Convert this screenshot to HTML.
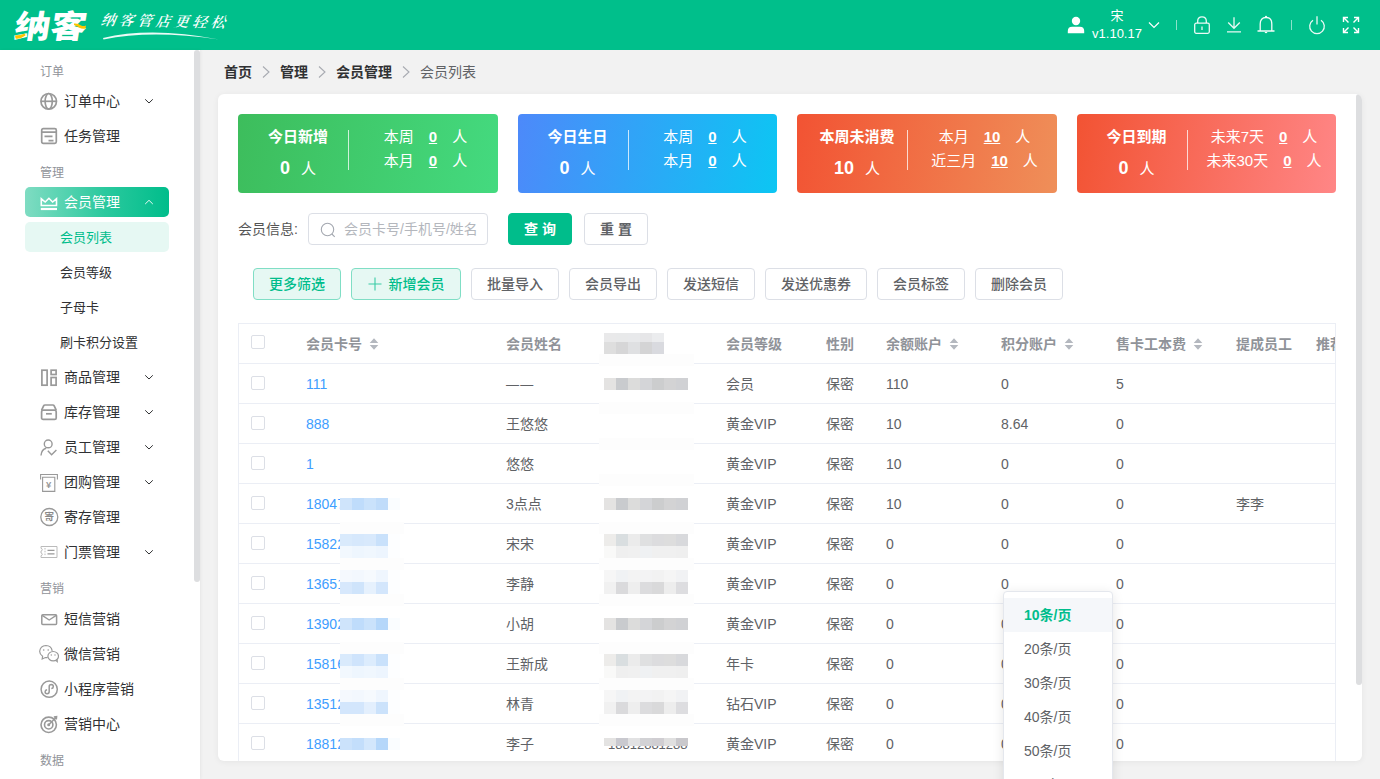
<!DOCTYPE html>
<html lang="zh-CN">
<head>
<meta charset="utf-8">
<title>会员列表</title>
<style>
*{box-sizing:border-box;margin:0;padding:0}
html,body{width:1380px;height:779px;overflow:hidden}
body{font-family:"Liberation Sans","Noto Sans CJK SC",sans-serif;font-size:14px;color:#303133;background:#f2f2f2;position:relative}
.abs{position:absolute}
/* top bar */
#top{position:absolute;left:0;top:0;width:1380px;height:50px;background:#00bf8b;color:#fff}
#top svg{position:absolute}
/* sidebar */
#side{position:absolute;left:0;top:50px;width:200px;height:729px;background:#fff;box-shadow:1px 0 3px rgba(0,0,0,.05)}
#side .thumb{position:absolute;left:194px;top:0;width:6px;height:532px;background:#dddee0;border-radius:3px}
.grp{position:absolute;left:40px;font-size:12px;color:#909399;line-height:16px;height:16px;margin-top:1px}
.mi{position:absolute;left:25px;width:144px;height:30px;line-height:30px;border-radius:5px;font-size:14px;color:#303133}
.mi .t{position:absolute;left:39px;top:0;font-weight:400}
.mi svg.ic{position:absolute;left:14px;top:5px}
.mi svg.cv{position:absolute;left:119px;top:12px}
.mi.act{background:linear-gradient(90deg,#7fdcc2 0%,#2bc99e 55%,#00bd8b 100%);color:#fff}
.si{position:absolute;left:25px;width:144px;height:30px;line-height:32px;border-radius:5px;font-size:13px;color:#303133;padding-left:35px}
.si.act{background:#e6f8f3;color:#00bd8b}
/* main */
#bc{position:absolute;left:224px;top:62px;height:20px;line-height:20px;font-size:14px;white-space:nowrap}
#bc b{font-weight:700;color:#303133}
#bc span.l{color:#606266}
#bc svg{display:inline-block;vertical-align:-1px;margin:0 9px 0 9px}
#card{position:absolute;left:218px;top:94px;width:1144px;height:667px;background:#fff;border-radius:6px;box-shadow:0 1px 6px rgba(0,0,0,.06);overflow:hidden}
#card .thumb{position:absolute;left:1138px;top:0;width:6px;height:591px;background:#dddee0;border-radius:3px}
.stat{position:absolute;top:20px;width:259.500px;height:79px;border-radius:4px;color:#fff;font-size:15px}
.stat .h{position:absolute;left:0;width:120px;top:11px;text-align:center;font-weight:700;line-height:24px}
.stat .n{position:absolute;left:0;width:120px;top:41px;text-align:center;line-height:26px}
.stat .n b{font-size:18px;margin-right:11px}
.stat .dv{position:absolute;left:110px;top:16px;width:1px;height:40px;background:rgba(255,255,255,.75)}
.stat .r{position:absolute;left:113px;width:149px;text-align:center;line-height:24px;white-space:nowrap}
.stat .r u{font-weight:700;margin:0 15px 0 15px;font-size:15px}
.btn{position:absolute;height:32px;line-height:30px;border:1px solid #dcdfe6;border-radius:4px;background:#fff;color:#606266;font-size:14px;font-weight:500;text-align:center;white-space:nowrap}
.btn.g{background:#e6f8f3;border-color:#80dec5;color:#00bd8b}
/* table */
#tb{position:absolute;left:20px;top:229px;width:1098px;height:440px;border-left:1px solid #ebeef5;border-top:1px solid #ebeef5;border-right:1px solid #ebeef5;overflow:hidden}
.tr{position:absolute;left:0;width:1098px;height:40px;border-bottom:1px solid #ebeef5;line-height:39px;font-size:14px;color:#606266;white-space:nowrap}
.tr span{position:absolute;top:1px}
.tr.hd{color:#909399;font-weight:700}
.tr a{position:absolute;color:#409eff;text-decoration:none;top:1px}
.cb{position:absolute;left:12px;top:12px;width:14px;height:14px;border:1px solid #dcdfe6;border-radius:2px;background:#fff}
.c1{left:67px}.c2{left:267px}.c3{left:367px}.c4{left:487px}.c5{left:587px}.c6{left:647px}.c7{left:762px}.c8{left:877px}.c9{left:997px}.c10{left:1077px}
.sort{position:absolute;top:14px;width:10px;height:12px}
#mz i{position:absolute;display:block}
/* dropdown */
#dd{position:absolute;left:1003px;top:591px;width:110px;height:230px;background:#fff;border:1px solid #e4e7ed;border-radius:4px;box-shadow:0 2px 12px rgba(0,0,0,.1)}
#dd div{position:absolute;left:0;width:108px;height:34px;line-height:34px;padding-left:20px;font-size:14px;color:#606266}
#dd div.sel{background:#f5f7fa;color:#00bd8b;font-weight:700}
</style>
</head>
<body>
<div id="top">
<svg style="left:10px;top:4px" width="100" height="42" viewBox="0 0 100 42">
<text x="2.500" y="34" font-family="'Liberation Sans','Noto Sans CJK SC',sans-serif" font-weight="900" font-size="32" fill="#fff" transform="skewX(-9) translate(6,0)" textLength="72" lengthAdjust="spacingAndGlyphs">纳客</text>
<path d="M5 31.5 Q10 31.5 15 29.5 L15.5 31.5 Q10 35.5 5.5 34.5Z" fill="#fdc500"/>
<path d="M64 19.5 Q68 19 71 21.5 Q73.500 22.5 76 21.5 L75.500 24.500 Q72 25.500 69 23.500 Q66.500 21.500 64 21Z" fill="#fdc500"/>
</svg>
<div class="abs" style="left:101px;top:8px;width:132px;height:24px;line-height:24px;font-family:'Liberation Serif','Noto Serif CJK SC',serif;font-size:14.500px;font-style:italic;font-weight:600;letter-spacing:3.800px;color:#fff;white-space:nowrap;transform-origin:0 50%;transform:rotate(1.200deg) skewX(-8deg)">纳客管店更轻松</div>
<svg style="left:100px;top:30px" width="125" height="12" viewBox="0 0 125 12"><path d="M3 8 Q52 -3.500 119 9.600 Q52 -0.500 3.500 9.400 Z" fill="#fff" opacity=".92"/></svg>
<svg style="left:1067px;top:16px" width="18" height="18" viewBox="0 0 18 18"><circle cx="9" cy="5" r="4.200" fill="#fff"/><path d="M0.800 17.200 V15 Q0.800 10.700 5.200 10.700 H12.800 Q17.200 10.700 17.200 15 V17.200 Z" fill="#fff"/></svg>
<div class="abs" style="left:1087px;top:6.500px;width:60px;text-align:center;font-size:13px;line-height:17px;white-space:nowrap">宋</div><div class="abs" style="left:1087px;top:24.500px;width:60px;text-align:center;font-size:13px;line-height:17px;white-space:nowrap">v1.10.17</div>
<svg style="left:1148px;top:21px" width="12" height="8" viewBox="0 0 12 8"><path d="M1 1.500 L6 6.500 L11 1.500" fill="none" stroke="#fff" stroke-width="1.200"/></svg>
<div class="abs" style="left:1176px;top:20px;width:1px;height:10px;background:rgba(255,255,255,.55)"></div>
<svg style="left:1193px;top:15px" width="18" height="20" viewBox="0 0 18 20"><rect x="1.700" y="8.200" width="14.600" height="10.100" rx="1.500" fill="none" stroke="#fff" stroke-width="1.300" opacity=".92"/><path d="M4.700 8 V6 Q4.700 1.800 9 1.800 Q13.300 1.800 13.300 6 V8" fill="none" stroke="#fff" stroke-width="1.300" opacity=".92"/><path d="M9 11.500 V15" stroke="#fff" stroke-width="1.300" opacity=".92"/></svg>
<svg style="left:1225px;top:15px" width="18" height="20" viewBox="0 0 18 20"><path d="M9 2.300 V13 M3.200 7.500 L9 13.300 L14.800 7.500 M2 16.800 H16" fill="none" stroke="#fff" stroke-width="1.300" opacity=".9"/></svg>
<svg style="left:1256px;top:14px" width="20" height="22" viewBox="0 0 20 22"><path d="M1.500 17 H18.500 M4.200 17 V10 Q4.200 3.500 10 3.500 Q15.800 3.500 15.800 10 V17" fill="none" stroke="#fff" stroke-width="1.300" opacity=".95"/><circle cx="10" cy="2.700" r="1" fill="#fff"/><path d="M8.500 18 Q10 20.500 11.500 18Z" fill="#fff"/></svg>
<div class="abs" style="left:1291px;top:20px;width:1px;height:10px;background:rgba(255,255,255,.55)"></div>
<svg style="left:1306px;top:14px" width="22" height="22" viewBox="0 0 22 22"><path d="M7 6.200 A7.300 7.300 0 1 0 15 6.200" fill="none" stroke="#fff" stroke-width="1.300" opacity=".92"/><path d="M11 2.300 V10.500" stroke="#fff" stroke-width="1.300" opacity=".92"/></svg>
<svg style="left:1342px;top:16px" width="18" height="18" viewBox="0 0 18 18"><g fill="none" stroke="#fff" stroke-width="1.400"><path d="M1.500 6 V1.500 H6 M1.800 1.800 L6.500 6.500"/><path d="M12 1.500 H16.500 V6 M16.200 1.800 L11.500 6.500"/><path d="M1.500 12 V16.500 H6 M1.800 16.200 L6.500 11.500"/><path d="M12 16.500 H16.500 V12 M16.200 16.200 L11.500 11.500"/></g></svg>
</div>
<div id="side"><div class="thumb"></div>
<div class="grp" style="top:13px">订单</div>
<div class="mi" style="top:36px"><svg class="ic" width="20" height="20" viewBox="0 0 20 20" fill="none" stroke="#999" stroke-width="1.7"><circle cx="9.700" cy="10.300" r="7.800"/><ellipse cx="9.700" cy="10.300" rx="3.600" ry="7.800"/><path d="M2 10.300 H17.400"/></svg><span class="t">订单中心</span><svg class="cv" width="10" height="6" viewBox="0 0 10 6"><path d="M1.200 1.300 L5 5 L8.800 1.300" fill="none" stroke="#303133" stroke-width="1"/></svg></div>
<div class="mi" style="top:71px"><svg class="ic" width="20" height="20" viewBox="0 0 20 20" fill="none" stroke="#999" stroke-width="1.7"><rect x="2.700" y="2.700" width="14.600" height="14.600" rx="1.500"/><path d="M2.700 6.200 H17.300 M5.500 10.400 H13.500 M9.500 14.600 H14.500"/></svg><span class="t">任务管理</span></div>
<div class="grp" style="top:114px">管理</div>
<div class="mi act" style="top:137px"><svg class="ic" width="20" height="20" viewBox="0 0 20 20" fill="none" stroke="#999" stroke-width="1.7"><path d="M2.300 13.500 V6.800 L6.200 10 L9.900 6.300 L13.600 10 L17.500 6.800 V13.500 Z" stroke="#fff" stroke-width="1.600"/><path d="M1.800 17 H18" stroke="#fff" stroke-width="2.200"/></svg><span class="t">会员管理</span><svg class="cv" width="10" height="6" viewBox="0 0 10 6"><path d="M1.200 5 L5 1.300 L8.800 5" fill="none" stroke="#fff" stroke-width="1" opacity=".9"/></svg></div>
<div class="si act" style="top:172px">会员列表</div>
<div class="si" style="top:207px">会员等级</div>
<div class="si" style="top:242px">子母卡</div>
<div class="si" style="top:277px">刷卡积分设置</div>
<div class="mi" style="top:312px"><svg class="ic" width="20" height="20" viewBox="0 0 20 20" fill="none" stroke="#999" stroke-width="1.7"><rect x="2.900" y="3.200" width="5.200" height="15"/><rect x="12.100" y="3.200" width="5" height="4.300"/><rect x="12.100" y="10.500" width="5" height="7.700"/></svg><span class="t">商品管理</span><svg class="cv" width="10" height="6" viewBox="0 0 10 6"><path d="M1.200 1.300 L5 5 L8.800 1.300" fill="none" stroke="#303133" stroke-width="1"/></svg></div>
<div class="mi" style="top:347px"><svg class="ic" width="20" height="20" viewBox="0 0 20 20" fill="none" stroke="#999" stroke-width="1.7"><path d="M2.600 8.200 L4.600 3.800 Q5 3 6 3 H13.800 Q14.800 3 15.200 3.800 L17.200 8.200"/><rect x="2.600" y="8.200" width="14.600" height="9.200" rx="1.500"/><path d="M7 11.800 H12.800"/></svg><span class="t">库存管理</span><svg class="cv" width="10" height="6" viewBox="0 0 10 6"><path d="M1.200 1.300 L5 5 L8.800 1.300" fill="none" stroke="#303133" stroke-width="1"/></svg></div>
<div class="mi" style="top:382px"><svg class="ic" width="20" height="20" viewBox="0 0 20 20" fill="none" stroke="#999" stroke-width="1.7"><circle cx="9.200" cy="6.900" r="3.900" stroke-width="1.400"/><path d="M2 18.500 Q2.500 12.500 7.200 11.300 M8.800 13.800 L12.600 17.800 L17.400 13" stroke-width="1.400"/></svg><span class="t">员工管理</span><svg class="cv" width="10" height="6" viewBox="0 0 10 6"><path d="M1.200 1.300 L5 5 L8.800 1.300" fill="none" stroke="#303133" stroke-width="1"/></svg></div>
<div class="mi" style="top:417px"><svg class="ic" width="20" height="20" viewBox="0 0 20 20" fill="none" stroke="#999" stroke-width="1.7"><path d="M1.600 7.500 V2.500 H18.400 V7.500" stroke-width="1.100"/><path d="M3.600 5.200 V19.400 H15.800 V5.200 Z" stroke-width="1.100" fill="#fff"/><text x="9.700" y="16" font-size="9.500" text-anchor="middle" fill="#999" stroke="none" font-family="'Liberation Sans',sans-serif" font-weight="700">¥</text></svg><span class="t">团购管理</span><svg class="cv" width="10" height="6" viewBox="0 0 10 6"><path d="M1.200 1.300 L5 5 L8.800 1.300" fill="none" stroke="#303133" stroke-width="1"/></svg></div>
<div class="mi" style="top:452px"><svg class="ic" width="20" height="20" viewBox="0 0 20 20" fill="none" stroke="#999" stroke-width="1.7"><circle cx="10.300" cy="10" r="8.500" stroke-width="1.300"/><text x="10.300" y="13.300" font-size="9.500" text-anchor="middle" fill="#888" stroke="none" font-weight="700" font-family="'Liberation Sans','Noto Sans CJK SC',sans-serif">寄</text></svg><span class="t">寄存管理</span></div>
<div class="mi" style="top:487px"><svg class="ic" width="20" height="20" viewBox="0 0 20 20" fill="none" stroke="#999" stroke-width="1.7"><path d="M2 4.500 H18 V15.500 H2 V13.700 Q3.300 13.400 3.300 12.300 Q3.300 11.200 2 11 V9 Q3.300 8.800 3.300 7.700 Q3.300 6.600 2 6.300 Z" stroke-width="1" stroke="#bbb"/><path d="M6 6 V14" stroke-dasharray="1.500 1.300" stroke-width="1" stroke="#bbb"/><path d="M8.500 8.300 H15.500 M8.500 11.800 H15.500" stroke-width="1.200"/></svg><span class="t">门票管理</span><svg class="cv" width="10" height="6" viewBox="0 0 10 6"><path d="M1.200 1.300 L5 5 L8.800 1.300" fill="none" stroke="#303133" stroke-width="1"/></svg></div>
<div class="grp" style="top:530px">营销</div>
<div class="mi" style="top:554px"><svg class="ic" width="20" height="20" viewBox="0 0 20 20" fill="none" stroke="#999" stroke-width="1.7"><rect x="2.800" y="5.700" width="14.800" height="9.800" rx="1" stroke-width="1.500"/><path d="M3.200 6.400 L10.200 11 L17.200 6.400" stroke-width="1.400"/></svg><span class="t">短信营销</span></div>
<div class="mi" style="top:589px"><svg class="ic" width="20" height="20" viewBox="0 0 20 20" fill="none" stroke="#999" stroke-width="1.7"><path d="M8.600 13.300 Q7.500 13.600 6.300 13.500 L3.200 15 L3.600 12.300 Q0.500 10.300 0.700 7.200 Q1.300 1.800 6.900 1.500 Q12.300 1.700 13.200 6.800" stroke-width="1.200"/><ellipse cx="14.200" cy="12.200" rx="5.300" ry="4.700" stroke-width="1.200" fill="#fff"/><path d="M16.800 16.400 L18.300 17.800 L18.200 15.600" stroke-width="1.100"/><circle cx="4.700" cy="6" r=".8" fill="#999" stroke="none"/><circle cx="9.200" cy="6" r=".8" fill="#999" stroke="none"/><circle cx="12.300" cy="11" r=".7" fill="#999" stroke="none"/><circle cx="16" cy="11" r=".7" fill="#999" stroke="none"/></svg><span class="t">微信营销</span></div>
<div class="mi" style="top:624px"><svg class="ic" width="20" height="20" viewBox="0 0 20 20" fill="none" stroke="#999" stroke-width="1.7"><circle cx="10.200" cy="10.200" r="8.100" stroke-width="1.500"/><path d="M10.200 12.600 Q10.200 14.700 8.100 14.700 Q6.100 14.600 6.100 12.700 Q6.200 10.900 8.100 10.700 M10.200 12.600 V7.700 Q10.200 5.600 12.300 5.600 Q14.300 5.700 14.300 7.600 Q14.200 9.400 12.300 9.600" stroke-width="1.500"/></svg><span class="t">小程序营销</span></div>
<div class="mi" style="top:659px"><svg class="ic" width="20" height="20" viewBox="0 0 20 20" fill="none" stroke="#999" stroke-width="1.7"><circle cx="9.700" cy="10.800" r="7.700" stroke-width="1.600"/><circle cx="9.700" cy="10.800" r="4.200" stroke-width="1.600"/><circle cx="9.700" cy="10.800" r="1.500" fill="#999" stroke="none"/><path d="M10.200 10.300 L17.300 3.200 M14.800 3 L17.600 2.700 L17.300 5.500" stroke-width="1.500"/></svg><span class="t">营销中心</span></div>
<div class="grp" style="top:702px">数据</div>
</div>
<div id="bc"><b>首页</b><svg width="10" height="12" viewBox="0 0 10 12"><path d="M2 0.500 L8 6 L2 11.500" fill="none" stroke="#a8abb2" stroke-width="1.100"/></svg><b>管理</b><svg width="10" height="12" viewBox="0 0 10 12"><path d="M2 0.500 L8 6 L2 11.500" fill="none" stroke="#a8abb2" stroke-width="1.100"/></svg><b>会员管理</b><svg width="10" height="12" viewBox="0 0 10 12"><path d="M2 0.500 L8 6 L2 11.500" fill="none" stroke="#a8abb2" stroke-width="1.100"/></svg><span class="l">会员列表</span></div>
<div id="card"><div class="thumb"></div>
<div class="stat" style="left:20px;background:linear-gradient(100deg,#3dbd5c 0%,#44da7f 100%)"><div class="h">今日新增</div><div class="n"><b>0</b>人</div><div class="dv"></div><div class="r" style="top:11px">本周<u>0</u>人</div><div class="r" style="top:35px">本月<u>0</u>人</div></div>
<div class="stat" style="left:299.500px;background:linear-gradient(100deg,#4d89fa 0%,#0cc6f3 100%)"><div class="h">今日生日</div><div class="n"><b>0</b>人</div><div class="dv"></div><div class="r" style="top:11px">本周<u>0</u>人</div><div class="r" style="top:35px">本月<u>0</u>人</div></div>
<div class="stat" style="left:579px;background:linear-gradient(100deg,#f25333 0%,#ef8f59 100%)"><div class="h">本周未消费</div><div class="n"><b>10</b>人</div><div class="dv"></div><div class="r" style="top:11px">本月<u>10</u>人</div><div class="r" style="top:35px">近三月<u>10</u>人</div></div>
<div class="stat" style="left:858.500px;background:linear-gradient(100deg,#f25333 0%,#ff8686 100%)"><div class="h">今日到期</div><div class="n"><b>0</b>人</div><div class="dv"></div><div class="r" style="top:11px">未来7天<u>0</u>人</div><div class="r" style="top:35px">未来30天<u>0</u>人</div></div>
<div class="abs" style="left:20px;top:119px;height:32px;line-height:32px;font-size:14px;color:#555">会员信息:</div>
<div class="abs" style="left:90px;top:119px;width:180px;height:32px;border:1px solid #dcdfe6;border-radius:4px;background:#fff"><svg class="abs" style="left:9px;top:7px" width="18" height="18" viewBox="0 0 18 18"><circle cx="9.500" cy="8.500" r="6.200" fill="none" stroke="#a4a8b0" stroke-width="1.100"/><path d="M13.900 13 L16.700 15.800" stroke="#a4a8b0" stroke-width="1.100"/></svg><span class="abs" style="left:35px;top:0;line-height:30px;font-size:14px;color:#b4b7bd;white-space:nowrap">会员卡号/手机号/姓名</span></div>
<div class="btn" style="left:290px;top:119px;width:64px;background:#00bd8b;border-color:#00bd8b;color:#fff;font-weight:700;letter-spacing:4px;padding-left:4px">查询</div>
<div class="btn" style="left:366px;top:119px;width:64px;font-weight:700;letter-spacing:4px;padding-left:4px">重置</div>
<div class="btn g" style="left:35px;top:174px;width:88px">更多筛选</div>
<div class="btn g" style="left:133px;top:174px;width:110px"><svg style="vertical-align:-2px;margin-right:7px" width="14" height="14" viewBox="0 0 14 14"><path d="M7 0.500 V13.500 M0.500 7 H13.500" stroke="#00bd8b" stroke-width="1.100" opacity=".75"/></svg>新增会员</div>
<div class="btn " style="left:253px;top:174px;width:88px">批量导入</div>
<div class="btn " style="left:351px;top:174px;width:88px">会员导出</div>
<div class="btn " style="left:449px;top:174px;width:88px">发送短信</div>
<div class="btn " style="left:547px;top:174px;width:102px">发送优惠券</div>
<div class="btn " style="left:659px;top:174px;width:88px">会员标签</div>
<div class="btn " style="left:757px;top:174px;width:88px">删除会员</div>
<div id="tb">
<div class="tr hd" style="top:0"><i class="cb" style="top:11px"></i><span class="c1">会员卡号</span><svg class="sort" style="left:130px" width="10" height="12" viewBox="0 0 10 12"><path d="M5 0.300 L9.300 5 H0.700 Z M5 11.700 L9.300 7 H0.700 Z" fill="#b4b8bf"/></svg><span class="c2">会员姓名</span><span class="c3">手机号</span><span class="c4">会员等级</span><span class="c5">性别</span><span class="c6">余额账户</span><svg class="sort" style="left:710px" width="10" height="12" viewBox="0 0 10 12"><path d="M5 0.300 L9.300 5 H0.700 Z M5 11.700 L9.300 7 H0.700 Z" fill="#b4b8bf"/></svg><span class="c7">积分账户</span><svg class="sort" style="left:825px" width="10" height="12" viewBox="0 0 10 12"><path d="M5 0.300 L9.300 5 H0.700 Z M5 11.700 L9.300 7 H0.700 Z" fill="#b4b8bf"/></svg><span class="c8">售卡工本费</span><svg class="sort" style="left:954px" width="10" height="12" viewBox="0 0 10 12"><path d="M5 0.300 L9.300 5 H0.700 Z M5 11.700 L9.300 7 H0.700 Z" fill="#b4b8bf"/></svg><span class="c9">提成员工</span><span class="c10">推荐人</span></div>
<div class="tr" style="top:40px"><i class="cb"></i><a class="c1">111</a><span class="c2" style="letter-spacing:1.300px;font-size:13px">——</span><span class="c3"></span><span class="c4">会员</span><span class="c5">保密</span><span class="c6">110</span><span class="c7">0</span><span class="c8">5</span><span class="c9"></span></div>
<div class="tr" style="top:80px"><i class="cb"></i><a class="c1">888</a><span class="c2">王悠悠</span><span class="c3"></span><span class="c4">黄金VIP</span><span class="c5">保密</span><span class="c6">10</span><span class="c7">8.64</span><span class="c8">0</span><span class="c9"></span></div>
<div class="tr" style="top:120px"><i class="cb"></i><a class="c1">1</a><span class="c2">悠悠</span><span class="c3"></span><span class="c4">黄金VIP</span><span class="c5">保密</span><span class="c6">10</span><span class="c7">0</span><span class="c8">0</span><span class="c9"></span></div>
<div class="tr" style="top:160px"><i class="cb"></i><a class="c1">18047</a><span class="c2">3点点</span><span class="c3"></span><span class="c4">黄金VIP</span><span class="c5">保密</span><span class="c6">10</span><span class="c7">0</span><span class="c8">0</span><span class="c9">李李</span></div>
<div class="tr" style="top:200px"><i class="cb"></i><a class="c1">15822</a><span class="c2">宋宋</span><span class="c3"></span><span class="c4">黄金VIP</span><span class="c5">保密</span><span class="c6">0</span><span class="c7">0</span><span class="c8">0</span><span class="c9"></span></div>
<div class="tr" style="top:240px"><i class="cb"></i><a class="c1">13651</a><span class="c2">李静</span><span class="c3"></span><span class="c4">黄金VIP</span><span class="c5">保密</span><span class="c6">0</span><span class="c7">0</span><span class="c8">0</span><span class="c9"></span></div>
<div class="tr" style="top:280px"><i class="cb"></i><a class="c1">13902</a><span class="c2">小胡</span><span class="c3"></span><span class="c4">黄金VIP</span><span class="c5">保密</span><span class="c6">0</span><span class="c7">0</span><span class="c8">0</span><span class="c9"></span></div>
<div class="tr" style="top:320px"><i class="cb"></i><a class="c1">15816</a><span class="c2">王新成</span><span class="c3"></span><span class="c4">年卡</span><span class="c5">保密</span><span class="c6">0</span><span class="c7">0</span><span class="c8">0</span><span class="c9"></span></div>
<div class="tr" style="top:360px"><i class="cb"></i><a class="c1">13512</a><span class="c2">林青</span><span class="c3"></span><span class="c4">钻石VIP</span><span class="c5">保密</span><span class="c6">0</span><span class="c7">0</span><span class="c8">0</span><span class="c9"></span></div>
<div class="tr" style="top:400px"><i class="cb"></i><a class="c1">18812</a><span class="c2">李子</span><span class="c3" style="font-size:13px;left:369px">18812881288</span><span class="c4">黄金VIP</span><span class="c5">保密</span><span class="c6">0</span><span class="c7">0</span><span class="c8">0</span><span class="c9"></span></div>
</div>
</div>
<div id="mz"><i style="left:599px;top:354px;width:95px;height:12px;background:#fdfdfd"></i><i style="left:599px;top:402px;width:95px;height:12px;background:#fdfdfd"></i><i style="left:599px;top:438px;width:95px;height:12px;background:#fdfdfd"></i><i style="left:599px;top:474px;width:95px;height:12px;background:#fdfdfd"></i><i style="left:599px;top:522px;width:95px;height:12px;background:#fdfdfd"></i><i style="left:599px;top:558px;width:95px;height:12px;background:#fdfdfd"></i><i style="left:599px;top:594px;width:95px;height:12px;background:#fdfdfd"></i><i style="left:599px;top:642px;width:95px;height:12px;background:#fdfdfd"></i><i style="left:599px;top:678px;width:95px;height:12px;background:#fdfdfd"></i><i style="left:599px;top:714px;width:95px;height:12px;background:#fdfdfd"></i><i style="left:604px;top:333px;width:12px;height:9px;background:#e9e9ea"></i><i style="left:616px;top:333px;width:12px;height:9px;background:#e8e9ea"></i><i style="left:628px;top:333px;width:12px;height:9px;background:#e8e9eb"></i><i style="left:640px;top:333px;width:12px;height:9px;background:#e6e6e8"></i><i style="left:652px;top:333px;width:12px;height:9px;background:#ebecee"></i><i style="left:604px;top:342px;width:12px;height:12px;background:#dedede"></i><i style="left:616px;top:342px;width:12px;height:12px;background:#d6d6d7"></i><i style="left:628px;top:342px;width:12px;height:12px;background:#dfe0e2"></i><i style="left:640px;top:342px;width:12px;height:12px;background:#d4d4d5"></i><i style="left:652px;top:342px;width:12px;height:12px;background:#d9dadf"></i><i style="left:604px;top:378px;width:12px;height:12px;background:#e4e3e2"></i><i style="left:616px;top:378px;width:12px;height:12px;background:#c9cbce"></i><i style="left:628px;top:378px;width:12px;height:12px;background:#dcdcdb"></i><i style="left:640px;top:378px;width:12px;height:12px;background:#d4d5d8"></i><i style="left:652px;top:378px;width:12px;height:12px;background:#cccdce"></i><i style="left:664px;top:378px;width:12px;height:12px;background:#d3d3d4"></i><i style="left:676px;top:378px;width:12px;height:12px;background:#d0d1d4"></i><i style="left:604px;top:498px;width:12px;height:12px;background:#e4e3e2"></i><i style="left:616px;top:498px;width:12px;height:12px;background:#c9cbce"></i><i style="left:628px;top:498px;width:12px;height:12px;background:#dcdcdb"></i><i style="left:640px;top:498px;width:12px;height:12px;background:#d4d5d8"></i><i style="left:652px;top:498px;width:12px;height:12px;background:#cccdce"></i><i style="left:664px;top:498px;width:12px;height:12px;background:#d3d3d4"></i><i style="left:676px;top:498px;width:12px;height:12px;background:#d0d1d4"></i><i style="left:604px;top:534px;width:12px;height:12px;background:#edecea"></i><i style="left:616px;top:534px;width:12px;height:12px;background:#d9dee0"></i><i style="left:628px;top:534px;width:12px;height:12px;background:#ebebeb"></i><i style="left:640px;top:534px;width:12px;height:12px;background:#dfe0e1"></i><i style="left:652px;top:534px;width:12px;height:12px;background:#dcdcde"></i><i style="left:664px;top:534px;width:12px;height:12px;background:#dddddd"></i><i style="left:676px;top:534px;width:12px;height:12px;background:#d8d9dc"></i><i style="left:604px;top:546px;width:12px;height:12px;background:#f9f9f8"></i><i style="left:616px;top:546px;width:12px;height:12px;background:#efefef"></i><i style="left:628px;top:546px;width:12px;height:12px;background:#f0f0f0"></i><i style="left:640px;top:546px;width:12px;height:12px;background:#eff1f3"></i><i style="left:652px;top:546px;width:12px;height:12px;background:#f0f0f0"></i><i style="left:664px;top:546px;width:12px;height:12px;background:#f0f0f0"></i><i style="left:676px;top:546px;width:12px;height:12px;background:#efefef"></i><i style="left:604px;top:570px;width:12px;height:12px;background:#f6f6f6"></i><i style="left:616px;top:570px;width:12px;height:12px;background:#f0f2f4"></i><i style="left:628px;top:570px;width:12px;height:12px;background:#f3f3f3"></i><i style="left:640px;top:570px;width:12px;height:12px;background:#f3f3f4"></i><i style="left:652px;top:570px;width:12px;height:12px;background:#f2f2f2"></i><i style="left:664px;top:570px;width:12px;height:12px;background:#f5f5f5"></i><i style="left:676px;top:570px;width:12px;height:12px;background:#f1f2f4"></i><i style="left:604px;top:582px;width:12px;height:12px;background:#f1f1f1"></i><i style="left:616px;top:582px;width:12px;height:12px;background:#dadadc"></i><i style="left:628px;top:582px;width:12px;height:12px;background:#eeeeee"></i><i style="left:640px;top:582px;width:12px;height:12px;background:#dcdcde"></i><i style="left:652px;top:582px;width:12px;height:12px;background:#d9d9da"></i><i style="left:664px;top:582px;width:12px;height:12px;background:#ededed"></i><i style="left:676px;top:582px;width:12px;height:12px;background:#dddde0"></i><i style="left:604px;top:618px;width:12px;height:12px;background:#e4e3e2"></i><i style="left:616px;top:618px;width:12px;height:12px;background:#c9cbce"></i><i style="left:628px;top:618px;width:12px;height:12px;background:#dcdcdb"></i><i style="left:640px;top:618px;width:12px;height:12px;background:#d4d5d8"></i><i style="left:652px;top:618px;width:12px;height:12px;background:#cccdce"></i><i style="left:664px;top:618px;width:12px;height:12px;background:#d3d3d4"></i><i style="left:676px;top:618px;width:12px;height:12px;background:#d0d1d4"></i><i style="left:604px;top:654px;width:12px;height:12px;background:#edecea"></i><i style="left:616px;top:654px;width:12px;height:12px;background:#d9dee0"></i><i style="left:628px;top:654px;width:12px;height:12px;background:#ebebeb"></i><i style="left:640px;top:654px;width:12px;height:12px;background:#dfe0e1"></i><i style="left:652px;top:654px;width:12px;height:12px;background:#dcdcde"></i><i style="left:664px;top:654px;width:12px;height:12px;background:#dddddd"></i><i style="left:676px;top:654px;width:12px;height:12px;background:#d8d9dc"></i><i style="left:604px;top:666px;width:12px;height:12px;background:#f9f9f8"></i><i style="left:616px;top:666px;width:12px;height:12px;background:#efefef"></i><i style="left:628px;top:666px;width:12px;height:12px;background:#f0f0f0"></i><i style="left:640px;top:666px;width:12px;height:12px;background:#eff1f3"></i><i style="left:652px;top:666px;width:12px;height:12px;background:#f0f0f0"></i><i style="left:664px;top:666px;width:12px;height:12px;background:#f0f0f0"></i><i style="left:676px;top:666px;width:12px;height:12px;background:#efefef"></i><i style="left:604px;top:690px;width:12px;height:12px;background:#f6f6f6"></i><i style="left:616px;top:690px;width:12px;height:12px;background:#f0f2f4"></i><i style="left:628px;top:690px;width:12px;height:12px;background:#f3f3f3"></i><i style="left:640px;top:690px;width:12px;height:12px;background:#f3f3f4"></i><i style="left:652px;top:690px;width:12px;height:12px;background:#f2f2f2"></i><i style="left:664px;top:690px;width:12px;height:12px;background:#f5f5f5"></i><i style="left:676px;top:690px;width:12px;height:12px;background:#f1f2f4"></i><i style="left:604px;top:702px;width:12px;height:12px;background:#f1f1f1"></i><i style="left:616px;top:702px;width:12px;height:12px;background:#dadadc"></i><i style="left:628px;top:702px;width:12px;height:12px;background:#eeeeee"></i><i style="left:640px;top:702px;width:12px;height:12px;background:#dcdcde"></i><i style="left:652px;top:702px;width:12px;height:12px;background:#d9d9da"></i><i style="left:664px;top:702px;width:12px;height:12px;background:#ededed"></i><i style="left:676px;top:702px;width:12px;height:12px;background:#dddde0"></i><i style="left:599px;top:726px;width:95px;height:12px;background:#fff"></i><i style="left:604px;top:738px;width:12px;height:8px;background:#e4e3e2"></i><i style="left:616px;top:738px;width:12px;height:8px;background:#c9c9cf"></i><i style="left:628px;top:738px;width:12px;height:8px;background:#e2e2e3"></i><i style="left:640px;top:738px;width:12px;height:8px;background:#d2d2d5"></i><i style="left:652px;top:738px;width:12px;height:8px;background:#d0ced2"></i><i style="left:664px;top:738px;width:12px;height:8px;background:#e0e0e0"></i><i style="left:676px;top:738px;width:12px;height:8px;background:#c9c8cc"></i><i style="left:340px;top:522px;width:64px;height:12px;background:#fdfdfd"></i><i style="left:340px;top:558px;width:64px;height:12px;background:#fdfdfd"></i><i style="left:340px;top:594px;width:64px;height:12px;background:#fdfdfd"></i><i style="left:340px;top:642px;width:64px;height:12px;background:#fdfdfd"></i><i style="left:340px;top:678px;width:64px;height:12px;background:#fdfdfd"></i><i style="left:340px;top:714px;width:64px;height:12px;background:#fdfdfd"></i><i style="left:340px;top:498px;width:12px;height:12px;background:#cfe4fb"></i><i style="left:352px;top:498px;width:12px;height:12px;background:#bfdcfb"></i><i style="left:364px;top:498px;width:12px;height:12px;background:#cae2fb"></i><i style="left:376px;top:498px;width:12px;height:12px;background:#c0dcfa"></i><i style="left:388px;top:498px;width:12px;height:12px;background:#fafdff"></i><i style="left:340px;top:534px;width:12px;height:12px;background:#d9eafc"></i><i style="left:352px;top:534px;width:12px;height:12px;background:#d6e8fc"></i><i style="left:364px;top:534px;width:12px;height:12px;background:#d8e9fc"></i><i style="left:376px;top:534px;width:12px;height:12px;background:#c9e1fb"></i><i style="left:388px;top:534px;width:12px;height:12px;background:#fdfeff"></i><i style="left:340px;top:546px;width:12px;height:12px;background:#f2f8fe"></i><i style="left:352px;top:546px;width:12px;height:12px;background:#eef6fe"></i><i style="left:364px;top:546px;width:12px;height:12px;background:#f0f7fe"></i><i style="left:376px;top:546px;width:12px;height:12px;background:#edf5fe"></i><i style="left:388px;top:546px;width:12px;height:12px;background:#fdfeff"></i><i style="left:340px;top:570px;width:12px;height:12px;background:#f5f9fe"></i><i style="left:352px;top:570px;width:12px;height:12px;background:#f3f8fe"></i><i style="left:364px;top:570px;width:12px;height:12px;background:#f6fafe"></i><i style="left:376px;top:570px;width:12px;height:12px;background:#eff6fe"></i><i style="left:388px;top:570px;width:12px;height:12px;background:#fdfeff"></i><i style="left:340px;top:582px;width:12px;height:12px;background:#d7e8fc"></i><i style="left:352px;top:582px;width:12px;height:12px;background:#cfe4fb"></i><i style="left:364px;top:582px;width:12px;height:12px;background:#e6f1fd"></i><i style="left:376px;top:582px;width:12px;height:12px;background:#d3e6fc"></i><i style="left:388px;top:582px;width:12px;height:12px;background:#fdfeff"></i><i style="left:340px;top:618px;width:12px;height:12px;background:#cfe4fb"></i><i style="left:352px;top:618px;width:12px;height:12px;background:#bfdcfb"></i><i style="left:364px;top:618px;width:12px;height:12px;background:#cae2fb"></i><i style="left:376px;top:618px;width:12px;height:12px;background:#b5d7fa"></i><i style="left:388px;top:618px;width:12px;height:12px;background:#fafdff"></i><i style="left:340px;top:654px;width:12px;height:12px;background:#d9eafc"></i><i style="left:352px;top:654px;width:12px;height:12px;background:#cfe4fc"></i><i style="left:364px;top:654px;width:12px;height:12px;background:#dcecfd"></i><i style="left:376px;top:654px;width:12px;height:12px;background:#c9e1fb"></i><i style="left:388px;top:654px;width:12px;height:12px;background:#fdfeff"></i><i style="left:340px;top:666px;width:12px;height:12px;background:#f2f8fe"></i><i style="left:352px;top:666px;width:12px;height:12px;background:#eef6fe"></i><i style="left:364px;top:666px;width:12px;height:12px;background:#f0f7fe"></i><i style="left:376px;top:666px;width:12px;height:12px;background:#edf5fe"></i><i style="left:388px;top:666px;width:12px;height:12px;background:#fdfeff"></i><i style="left:340px;top:690px;width:12px;height:12px;background:#f5f9fe"></i><i style="left:352px;top:690px;width:12px;height:12px;background:#f3f8fe"></i><i style="left:364px;top:690px;width:12px;height:12px;background:#f6fafe"></i><i style="left:376px;top:690px;width:12px;height:12px;background:#eff6fe"></i><i style="left:388px;top:690px;width:12px;height:12px;background:#fdfeff"></i><i style="left:340px;top:702px;width:12px;height:12px;background:#d3e6fc"></i><i style="left:352px;top:702px;width:12px;height:12px;background:#d3e6fc"></i><i style="left:364px;top:702px;width:12px;height:12px;background:#e3effd"></i><i style="left:376px;top:702px;width:12px;height:12px;background:#cbe2fb"></i><i style="left:388px;top:702px;width:12px;height:12px;background:#fdfeff"></i><i style="left:340px;top:738px;width:12px;height:12px;background:#cbe2fb"></i><i style="left:352px;top:738px;width:12px;height:12px;background:#c3defb"></i><i style="left:364px;top:738px;width:12px;height:12px;background:#d3e7fc"></i><i style="left:376px;top:738px;width:12px;height:12px;background:#b5d7fa"></i><i style="left:388px;top:738px;width:12px;height:12px;background:#fafdff"></i></div>
<div id="dd"><div class="sel" style="top:6px">10条/页</div><div style="top:40px">20条/页</div><div style="top:74px">30条/页</div><div style="top:108px">40条/页</div><div style="top:142px">50条/页</div><div style="top:176px">100条/页</div></div>
</body>
</html>
